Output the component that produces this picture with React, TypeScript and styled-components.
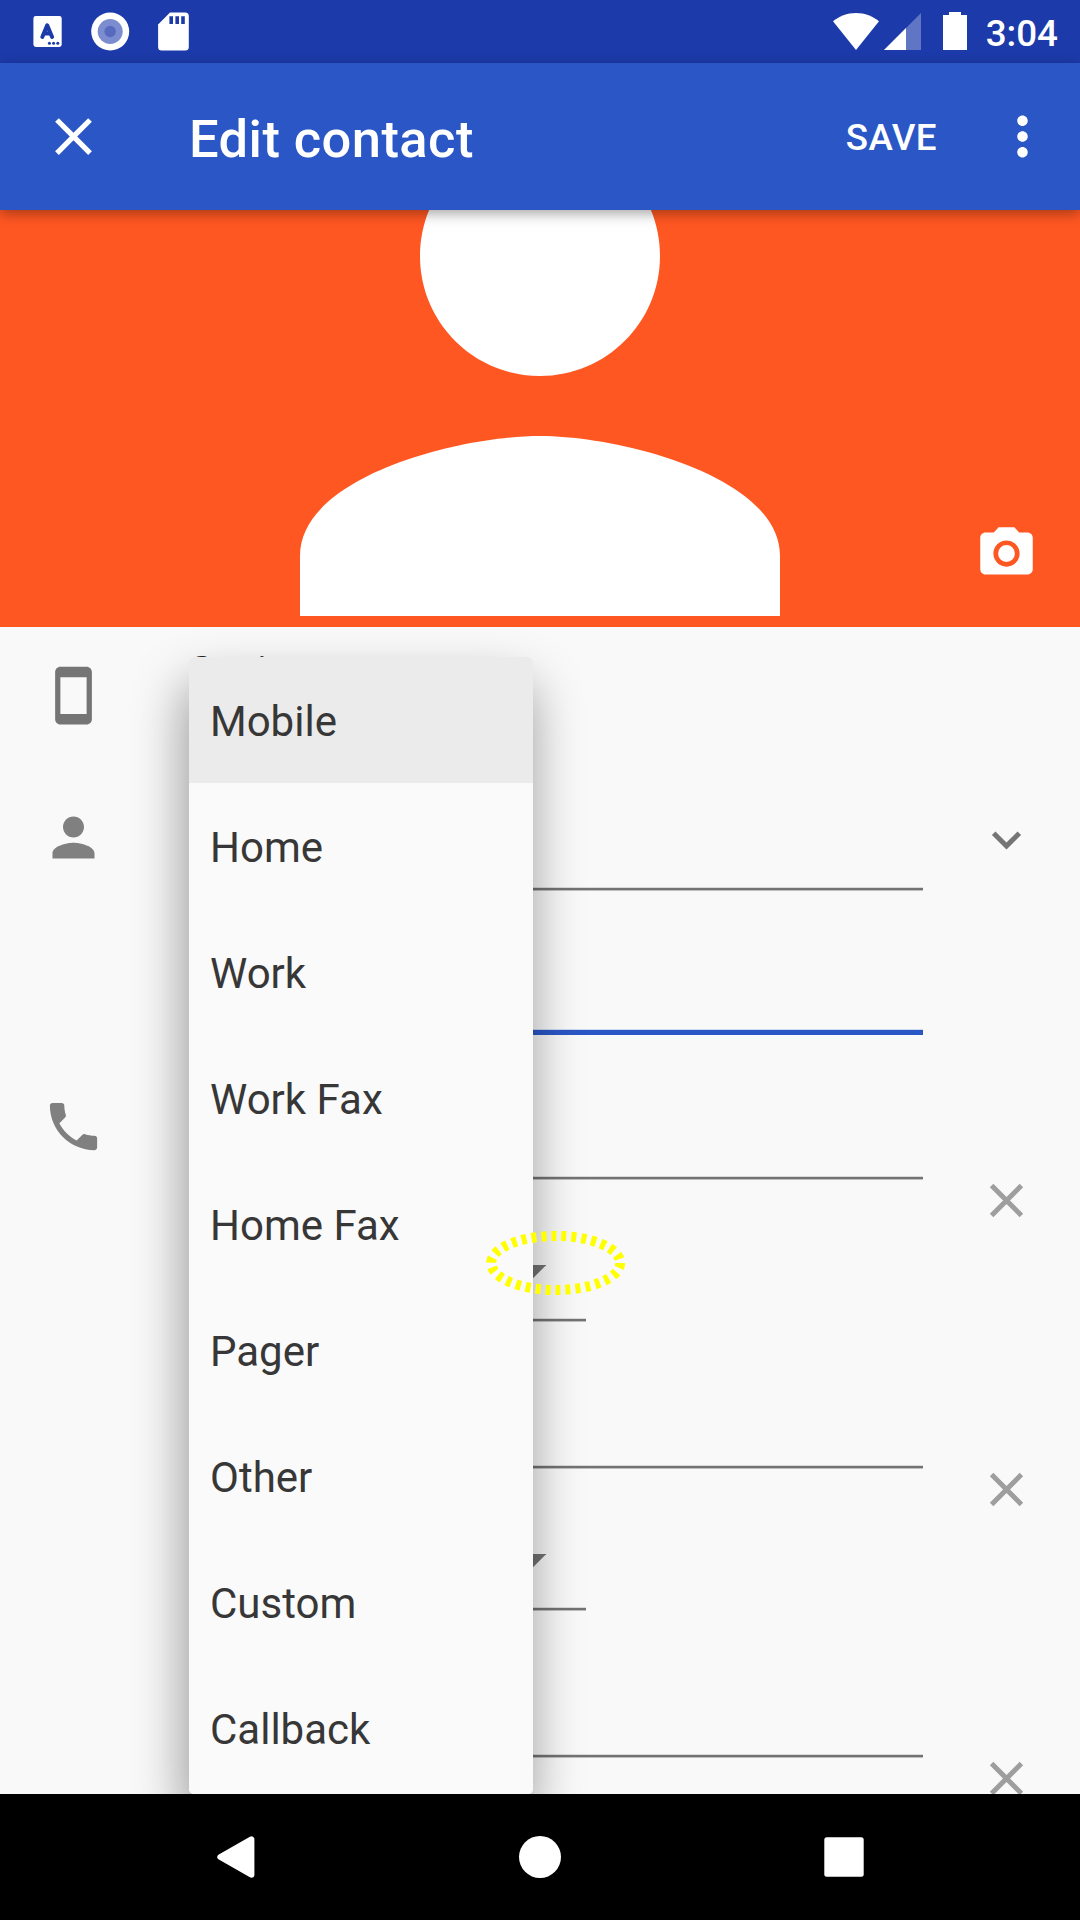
import React from "react";
import styled, { createGlobalStyle } from "styled-components";

const GlobalStyle = createGlobalStyle`
  * { box-sizing: border-box; }
  body { margin: 0; background: #f9f9f9; }
  svg { display: block; flex: none; }
`;

const Screen = styled.div`
  position: relative;
  display: flex;
  flex-direction: column;
  width: 1080px;
  height: 1920px;
  overflow: hidden;
  background: #f9f9f9;
  font-family: Roboto, "Liberation Sans", sans-serif;
`;

const StatusBar = styled.header`
  display: flex;
  justify-content: space-between;
  align-items: center;
  flex: none;
  height: 63px;
  padding: 0 22px 0 33px;
  background: #1c3aa9;
  color: #fff;
`;

const StatusGroup = styled.div`
  display: flex;
  align-items: center;
`;

const Clock = styled.span`
  margin-left: 18px;
  padding-top: 3px;
  font-size: 36.75px;
  font-weight: 500;
  line-height: 43px;
`;

const Toolbar = styled.div`
  z-index: 1;
  display: flex;
  align-items: center;
  flex: none;
  height: 147px;
  padding: 0 26px 0 42px;
  background: #2a56c6;
  color: #fff;
  box-shadow: 0 4px 12px rgba(0, 0, 0, 0.34);
`;

const Title = styled.h1`
  flex: 1;
  margin: 0 0 0 84px;
  padding-top: 4px;
  font-size: 52.5px;
  font-weight: 500;
  line-height: 62px;
  letter-spacing: 0.42px;
`;

const SaveButton = styled.button`
  margin: 0 54px 0 0;
  padding: 2px 0 0;
  border: 0;
  background: none;
  color: inherit;
  font: 500 36.75px/43px Roboto, "Liberation Sans", sans-serif;
  letter-spacing: 0.4px;
`;

const Photo = styled.div`
  display: grid;
  grid-template-columns: 180px 720px 180px;
  grid-template-rows: 417px;
  flex: none;
  height: 417px;
  overflow: hidden;
  background: #ff5722;
`;

const Avatar = styled.svg`
  grid-column: 2;
  width: 720px;
  height: 720px;
  margin-top: -194.5px;
`;

const CameraSlot = styled.div`
  grid-column: 3;
  display: flex;
  justify-content: flex-end;
  align-items: flex-end;
  padding: 0 42px 42px 0;
`;

const Form = styled.main`
  flex: 1;
  min-height: 0;
  overflow: hidden;
`;

const Section = styled.section<{ $height: number }>`
  display: grid;
  grid-template-columns: 189px 734px 157px;
  height: ${(p) => p.$height}px;
`;

const Side = styled.div<{ $top: number; $color: string }>`
  display: flex;
  align-items: flex-start;
  padding: ${(p) => p.$top}px 0 0 42px;
  color: ${(p) => p.$color};
`;

const Action = styled(Side)`
  padding-left: 52px;
`;

const Account = styled.div`
  padding-top: 20px;
  font-size: 42px;
  line-height: 49px;
  color: #212121;
`;

const fieldLine = {
  idle: "linear-gradient(#dadada 0 1px, #737373 1px 3px, #bfbfbf 3px 4px)",
  focused: "linear-gradient(#cdd7f0 0 1px, #2a56c6 1px 6px)",
};

const Field = styled.div<{ $height: number; $focused?: boolean; $width?: number }>`
  display: flex;
  justify-content: flex-end;
  width: ${(p) => p.$width ?? 734}px;
  height: ${(p) => p.$height}px;
  background: ${(p) => (p.$focused ? fieldLine.focused : fieldLine.idle)} bottom / 100%
    ${(p) => (p.$focused ? 6 : 4)}px no-repeat;
`;

const Arrow = styled.svg`
  width: 26.25px;
  height: 13.125px;
  margin: 85.3px 40.1px 0 0;
`;

const Menu = styled.ul`
  position: absolute;
  top: 657px;
  left: 189px;
  width: 344px;
  height: 1137px;
  margin: 0;
  padding: 0;
  list-style: none;
  overflow: hidden;
  border-radius: 5px;
  background: #fafafa;
`;

const MenuShadow = styled.div`
  position: absolute;
  inset: 627px 0 126px;
  overflow: hidden;

  &::before {
    content: "";
    position: absolute;
    top: 30px;
    left: 189px;
    width: 344px;
    height: 1137px;
    border-radius: 5px;
    box-shadow: -3px 28px 52px rgba(0, 0, 0, 0.41);
  }
`;

const MenuItem = styled.li<{ $selected: boolean }>`
  display: flex;
  align-items: center;
  height: 126px;
  padding: 2px 21px 0;
  background: ${(p) => (p.$selected ? "#ebebeb" : "transparent")};
  color: #373737;
  font-size: 42px;
  line-height: 49px;
`;

const TouchMarker = styled.svg`
  position: absolute;
  left: 485px;
  top: 1229px;
  width: 142px;
  height: 68px;
`;

const NavBar = styled.nav`
  display: grid;
  grid-template-columns: repeat(3, 304px);
  justify-content: center;
  justify-items: center;
  align-items: center;
  flex: none;
  height: 126px;
  background: #000;
`;

const PERSON =
  "M12 12c2.21 0 4-1.79 4-4s-1.79-4-4-4-4 1.79-4 4 1.79 4 4 4zm0 2c-2.67 0-8 1.34-8 4v2h16v-2c0-2.66-5.33-4-8-4z";
const CLOSE =
  "M19 6.41L17.59 5 12 10.59 6.41 5 5 6.41 10.59 12 5 17.59 6.41 19 12 13.41 17.59 19 19 17.59 13.41 12z";
const MORE =
  "M12 8c1.1 0 2-.9 2-2s-.9-2-2-2-2 .9-2 2 .9 2 2 2zm0 2c-1.1 0-2 .9-2 2s.9 2 2 2 2-.9 2-2-.9-2-2-2zm0 6c-1.1 0-2 .9-2 2s.9 2 2 2 2-.9 2-2-.9-2-2-2z";
const CAMERA =
  "M12 8.8a3.2 3.2 0 1 0 0 6.4 3.2 3.2 0 0 0 0-6.4zM9 2L7.17 4H4c-1.1 0-2 .9-2 2v12c0 1.1.9 2 2 2h16c1.1 0 2-.9 2-2V6c0-1.1-.9-2-2-2h-3.17L15 2H9zm3 15c-2.76 0-5-2.24-5-5s2.24-5 5-5 5 2.24 5 5-2.24 5-5 5z";
const DEVICE =
  "M17 1.01L7 1c-1.1 0-1.99.9-1.99 2v18c0 1.1.89 2 1.99 2h10c1.1 0 2-.9 2-2V3c0-1.1-.9-1.99-2-1.99zM17 19H7V5h10v14z";
const PHONE =
  "M6.62 10.79c1.44 2.83 3.76 5.14 6.59 6.59l2.2-2.2c.27-.27.67-.36 1.02-.24 1.12.37 2.33.57 3.57.57.55 0 1 .45 1 1V20c0 .55-.45 1-1 1-9.39 0-17-7.61-17-17 0-.55.45-1 1-1h3.5c.55 0 1 .45 1 1 0 1.25.2 2.45.57 3.57.11.35.03.74-.25 1.02l-2.2 2.2z";

const Icon = ({ d }: { d: string }) => (
  <svg width="63" height="63" viewBox="0 0 24 24" fill="currentColor">
    <path d={d} />
  </svg>
);

const ExpandIcon = () => (
  <svg width="63" height="63" viewBox="0 0 63 63" fill="none" stroke="currentColor" strokeWidth="5">
    <path d="M18.700 25.200L31.500 38L44.300 25.200" />
  </svg>
);

const RemoveIcon = () => (
  <svg width="63" height="63" viewBox="0 0 63 63" stroke="currentColor" strokeWidth="5">
    <path d="M16.600 16.600L46.400 46.400M46.400 16.600L16.600 46.400" />
  </svg>
);

const NotificationIcons = () => (
  <svg width="160" height="63" viewBox="33 0 160 63" fill="#fff">
    <rect x="33.4" y="16" width="28.3" height="31" rx="2.4" />
    <path
      d="M42.3 37L47.2 25.4L52.1 37M44.3 33.4H50.4"
      fill="none"
      stroke="#1c3aa9"
      strokeWidth="4"
      strokeLinecap="round"
      strokeLinejoin="round"
    />
    <g fill="#1c3aa9">
      <circle cx="49.4" cy="43.2" r="1.5" />
      <circle cx="53.6" cy="43.2" r="1.5" />
      <circle cx="57.8" cy="43.2" r="1.5" />
    </g>
    <circle cx="110.2" cy="31.5" r="19" />
    <circle cx="110.2" cy="31.5" r="12.5" fill="#7b8ccf" />
    <circle cx="110.2" cy="31.5" r="5.7" fill="#566abf" />
    <path d="M170 12.600H185.200a3.600 3.600 0 0 1 3.600 3.600V47a3.600 3.600 0 0 1-3.600 3.600H161.700a3.600 3.600 0 0 1-3.600-3.600V24.500z" />
    <path
      d="M169.400 16.200h3.600v7.800h-3.600zM175.400 16.200h3.600v7.800h-3.600zM181.200 16.200h3.600v7.800h-3.600z"
      fill="#1c3aa9"
    />
  </svg>
);

const SystemIcons = () => (
  <svg width="136" height="63" viewBox="832 0 136 63" fill="#fff">
    <path d="M856 50L833 21.300C839 16.400 847 13 856 13S873 16.400 879 21.300z" />
    <path d="M921 13V50H884z" opacity="0.3" />
    <path d="M906 28V50H884z" />
    <path d="M949 12h12v3h6v35h-24V15h6z" />
  </svg>
);

const options = ["Mobile", "Home", "Work", "Work Fax", "Home Fax", "Pager", "Other", "Custom", "Callback"];

const PhoneEntry = ({ first }: { first?: boolean }) => (
  <Section $height={289}>
    <Side $top={60} $color="#808080">
      {first && <Icon d={PHONE} />}
    </Side>
    <div>
      <Field $height={145} />
      <Field $height={142} $width={397}>
        <Arrow viewBox="0 0 10 5" fill="#737373">
          <path d="M0 0h10L5 5z" />
        </Arrow>
      </Field>
    </div>
    <Action $top={133.5} $color="#9e9e9e">
      <RemoveIcon />
    </Action>
  </Section>
);

export default function App() {
  return (
    <Screen>
      <GlobalStyle />
      <StatusBar>
        <NotificationIcons />
        <StatusGroup>
          <SystemIcons />
          <Clock>3:04</Clock>
        </StatusGroup>
      </StatusBar>
      <Toolbar>
        <Icon d={CLOSE} />
        <Title>Edit contact</Title>
        <SaveButton>SAVE</SaveButton>
        <Icon d={MORE} />
      </Toolbar>
      <Photo>
        <Avatar viewBox="0 0 24 24" fill="#fff">
          <path d={PERSON} />
        </Avatar>
        <CameraSlot>
          <svg width="63" height="63" viewBox="0 0 24 24" fill="#fff">
            <path d={CAMERA} />
          </svg>
        </CameraSlot>
      </Photo>
      <Form>
        <Section $height={137}>
          <Side $top={37} $color="#757575">
            <Icon d={DEVICE} />
          </Side>
          <Account>Saving to</Account>
        </Section>
        <Section $height={271}>
          <Side $top={42} $color="#808080">
            <Icon d={PERSON} />
          </Side>
          <div>
            <Field $height={127} />
            <Field $height={144} $focused />
          </div>
          <Action $top={44} $color="#757575">
            <ExpandIcon />
          </Action>
        </Section>
        <PhoneEntry first />
        <PhoneEntry />
        <PhoneEntry />
      </Form>
      <NavBar>
        <svg width="38" height="42" viewBox="0 0 38 42" fill="#fff" stroke="#fff" strokeWidth="6" strokeLinejoin="round">
          <path d="M3.300 21L34.400 3.300V38.700z" />
        </svg>
        <svg width="42" height="42" viewBox="0 0 42 42" fill="#fff">
          <circle cx="21" cy="21" r="21" />
        </svg>
        <svg width="40" height="40" viewBox="0 0 40 40" fill="#fff">
          <rect x="0.300" y="0.300" width="39.400" height="39.400" rx="2.500" />
        </svg>
      </NavBar>
      <MenuShadow />
      <Menu>
        {options.map((option, i) => (
          <MenuItem key={option} $selected={i === 0}>
            {option}
          </MenuItem>
        ))}
      </Menu>
      <TouchMarker viewBox="485 1229 142 68" fill="none" stroke="#ff0" strokeWidth="10">
        <ellipse cx="555.700" cy="1263" rx="64.500" ry="27" strokeDasharray="5 5" />
      </TouchMarker>
    </Screen>
  );
}
